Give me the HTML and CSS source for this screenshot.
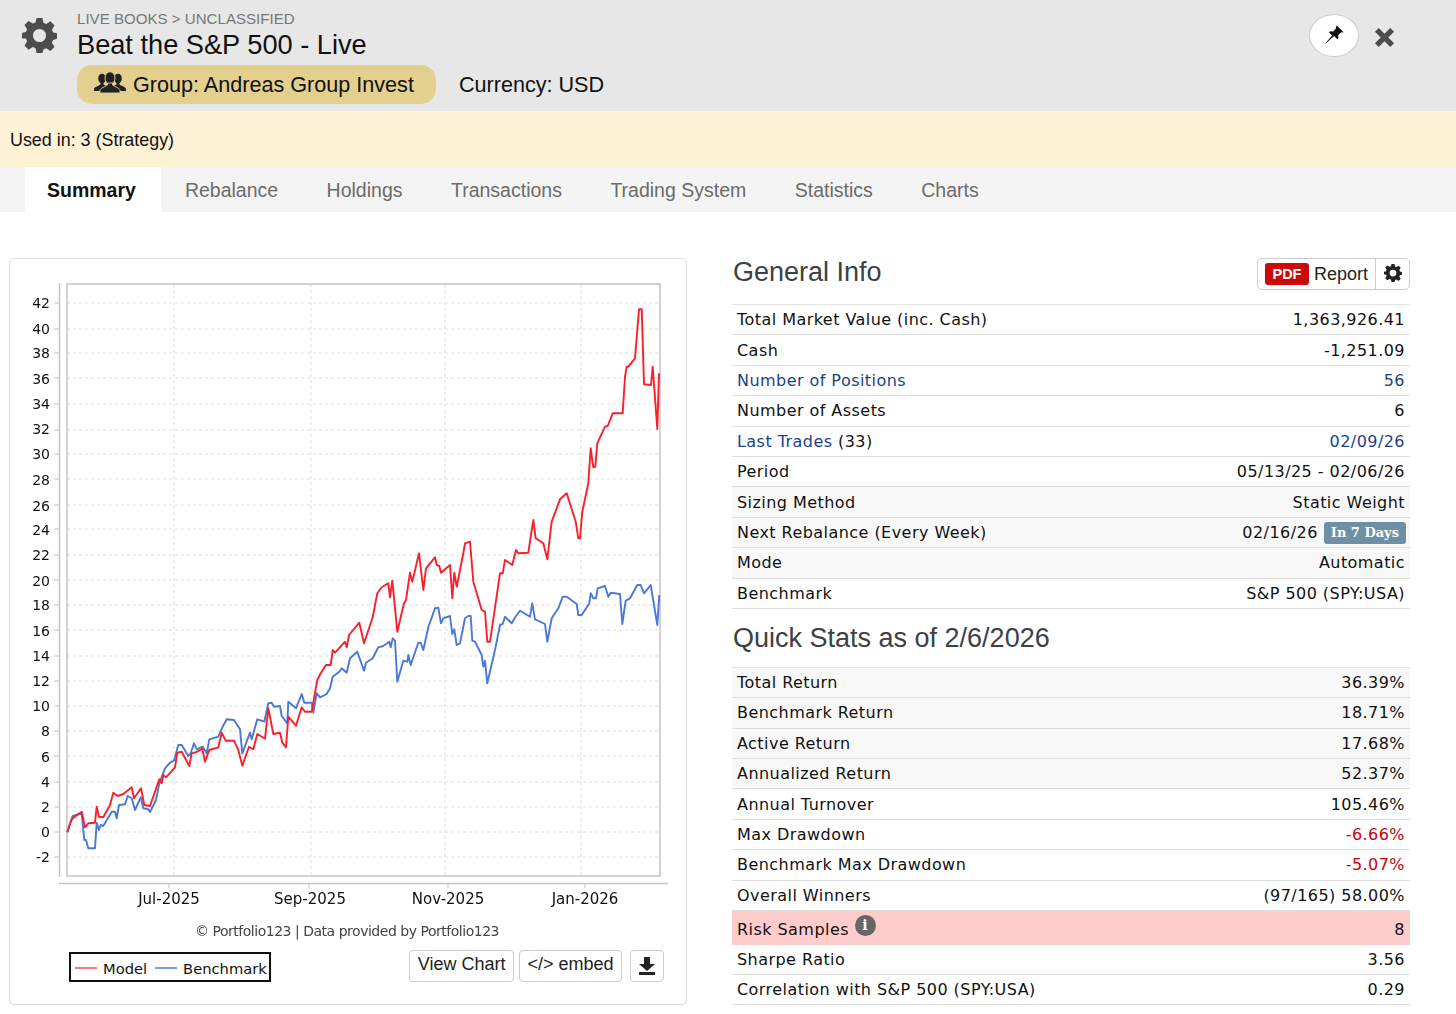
FILE: index.html
```html
<!DOCTYPE html>
<html lang="en">
<head>
<meta charset="utf-8">
<title>Beat the S&amp;P 500 - Live</title>
<link rel="stylesheet" href="styles.css">
</head>
<body>
<svg class="defs" width="0" height="0" aria-hidden="true">
  <defs>
    <symbol id="gear" viewBox="0 0 24 24">
      <path fill-rule="evenodd" d="M10 0h4l.7 3.300 1.900.8 2.900-1.800 2.800 2.800-1.800 2.900.8 1.900 2.700.6v3.800l-2.700.7-.8 1.900 1.800 2.900-2.800 2.800-2.900-1.800-1.900.8L14 24h-4l-.7-3.300-1.900-.8-2.900 1.800-2.800-2.800 1.800-2.900-.8-1.900L0 14v-3.800l2.700-.6.8-1.900-1.800-2.900 2.800-2.800 2.900 1.800 1.900-.8zM12 7.500a4.500 4.500 0 1 0 0 9 4.500 4.500 0 0 0 0-9z"/>
    </symbol>
  </defs>
</svg>
<header class="top">
  <svg class="top-gear"><use href="#gear"/></svg>
  <div class="top-text">
    <div class="crumb">LIVE BOOKS &gt; UNCLASSIFIED</div>
    <h1 class="title">Beat the S&amp;P 500 - Live</h1>
    <div class="meta">
      <span class="group">
        <svg class="group-icon" viewBox="0 0 32 22">
          <ellipse cx="8" cy="7.500" rx="3.800" ry="4.800"/>
          <path d="M0 20v-2c0-2 5-3 6.500-4.500v-2h3v2C11 15 16 16 16 18v2z"/>
          <ellipse cx="24" cy="7.500" rx="3.800" ry="4.800"/>
          <path d="M16 20v-2c0-2 5-3 6.500-4.500v-2h3v2C27 15 32 16 32 18v2z"/>
          <ellipse class="group-front" cx="16" cy="7" rx="5" ry="6.200"/>
          <path class="group-front" d="M6 22v-2.500c0-2.500 5.500-3.800 7.500-5.500v-2h5v2c2 1.700 7.500 3 7.500 5.500V22z"/>
        </svg>
        <span>Group: Andreas Group Invest</span>
      </span>
      <span class="currency">Currency: USD</span>
    </div>
  </div>
  <div class="top-actions">
    <button class="pin" type="button" aria-label="Pin">
      <svg class="pin-icon" viewBox="0 0 20 20"><path d="M12.500 .5l7 7-1.500.5-1-.4-3.200 3.200.3 3-1.200 1.200-3.300-3.300L.8 19.500l-.4-.4 7.100-8-3.300-3.300 1.200-1.200 3 .3 3.200-3.200-.4-1z"/></svg>
    </button>
    <svg class="close" viewBox="0 0 22 22" aria-label="Close"><path d="M5 1l6 6 6-6 4 4-6 6 6 6-4 4-6-6-6 6-4-4 6-6-6-6z"/></svg>
  </div>
</header>
<div class="notice">Used in: 3 (Strategy)</div>
<nav class="tabs">
  <a class="tab active">Summary</a>
  <a class="tab">Rebalance</a>
  <a class="tab">Holdings</a>
  <a class="tab">Transactions</a>
  <a class="tab">Trading System</a>
  <a class="tab">Statistics</a>
  <a class="tab">Charts</a>
</nav>
<main class="content">
  <section class="chart-card">
    <svg class="chart" viewBox="10 259 676 688">
      <g class="grid">
        <path d="M67 303H660M67 329H660M67 353H660M67 378H660M67 404H660M67 430H660M67 454H660M67 479H660M67 505H660M67 529H660M67 555H660M67 580H660M67 605H660M67 630H660M67 656H660M67 681H660M67 706H660M67 731H660M67 756H660M67 782H660M67 807H660M67 832H660M67 857H660"/>
        <path d="M174 284V876M311 284V876M445 284V876M581 284V876"/>
      </g>
      <rect class="frame" x="67" y="284" width="593" height="592"/>
      <path class="axis" d="M59.500 283V877M59 883.500H668"/>
      <path class="tick" d="M54 303H59M54 329H59M54 353H59M54 378H59M54 404H59M54 430H59M54 454H59M54 479H59M54 505H59M54 529H59M54 555H59M54 580H59M54 605H59M54 630H59M54 656H59M54 681H59M54 706H59M54 731H59M54 756H59M54 782H59M54 807H59M54 832H59M54 857H59M169 884V888M309 884V888M448 884V888M585 884V888"/>
      <g class="ylabels">
        <text x="50" y="308">42</text><text x="50" y="334">40</text><text x="50" y="358">38</text><text x="50" y="384">36</text><text x="50" y="409">34</text><text x="50" y="434">32</text><text x="50" y="459">30</text><text x="50" y="485">28</text><text x="50" y="511">26</text><text x="50" y="535">24</text><text x="50" y="560">22</text><text x="50" y="586">20</text><text x="50" y="610">18</text><text x="50" y="636">16</text><text x="50" y="661">14</text><text x="50" y="686">12</text><text x="50" y="711">10</text><text x="50" y="736">8</text><text x="50" y="762">6</text><text x="50" y="787">4</text><text x="50" y="812">2</text><text x="50" y="837">0</text><text x="50" y="862">-2</text>
      </g>
      <g class="xlabels">
        <text x="169" y="904">Jul-2025</text><text x="310" y="904">Sep-2025</text><text x="448" y="904">Nov-2025</text><text x="585" y="904">Jan-2026</text>
      </g>
      <polyline class="line-blue" points="67.300,832.300 70.700,821.700 72.700,816 79.300,814 81.700,814 84.300,840 86,840 88.300,848.300 95,848.300 96.700,822.700 99,830 100.700,825 103.300,826 111.700,811.700 115,811.700 116.700,818.300 119,805 125,804.300 127.700,796 131.700,798.300 135,810 140.700,797.300 143.300,808.300 148.300,809.300 150,812 156,800 159.300,783.300 165,768.300 170,762.700 174,760.700 178.300,745 181.700,745 188.300,756 190.700,753.300 194,743.300 196.700,749.300 202.700,746.700 206.700,753.300 209.300,739.300 218.300,736.700 222.700,726.700 226.700,719.300 234,720 240,729.300 242.300,753.300 250,732.700 251.700,739.300 257.300,719.300 264.300,721.700 268.300,703.300 271.700,702.700 274,706.700 280,706 281.700,716 287.300,723.300 288.300,701.700 296,708.300 301.700,694 304.300,702.700 311.700,702.700 313.300,712.700 316.700,693.300 320,697.300 326.700,694 330,688.300 332.700,676.700 339.300,671.700 341.700,668.300 346.700,672.700 350,658.300 357.300,651.700 364,670.700 366,662.700 372.700,658.300 378.300,647.300 383.300,646 389.300,641.700 390.700,647.300 392.700,638.300 395,640.700 397.300,681.700 403.300,660.700 407.300,661.700 408.300,655 410.700,665 418.300,642.700 420.700,642.700 423.300,650 428.300,627.300 435,608.300 438.300,607.700 441,623.300 443.300,618.300 450,616 452.300,634 454.300,629.300 456.700,645 460,643.300 465,618.300 468.300,616 470.700,616 472.300,640.700 475,641.700 481.700,655 483.300,666.700 485,660.700 487.300,683.300 495,650 500,625 502.700,624 505,616.700 511.700,623.300 516,616 520,610.700 530,616.700 532.300,603.300 535,619.300 545,624 547.300,641.700 551.700,618.300 558.300,608.300 562.700,596.700 566.700,596.700 576.700,604 578.300,615 581.700,615 589.300,603.300 590.700,593.300 593.300,598.300 596,598.300 597.700,588.300 605,586 608.300,596.700 610.700,592.700 620,594 622.300,624 625.700,600.700 630,598.300 637.300,585 640.700,585 644,593.300 650.700,585 657.300,625 659.300,595"/>
      <polyline class="line-red" points="67.300,832.300 70.700,821.700 72.700,818.300 81.700,811.700 85,827.300 88.300,823.300 95,822.700 96.700,806.700 99,816.700 103.300,817.300 110,805 113.300,792.700 117.700,796 123.300,794 131.700,787.300 134,798.300 141,788.300 144.300,805 150,806 157.300,785 159.300,779.300 161.700,783.300 163.300,775 166,777.300 175,767.300 177.300,752.700 181.700,751.700 189.300,766 191.700,753.300 196.700,752 202.300,748.700 205,761.700 209.300,750 218.300,747.300 221.700,732.700 225.700,740.700 234,740.700 238.300,750 242.300,765.700 249,746.700 253.300,749.300 257.300,734 265,738.700 268.300,708.300 273.300,734 280,732.700 282.300,742.700 286,747.300 288.300,716.700 296,725.700 301.700,707.300 305,711.700 311.700,711.700 317.300,680 320.700,673.300 326,665 330.700,665 332.700,650 335,652.700 345,641.700 346.700,647.300 349,635 359.300,622.700 364,643.300 372.700,617.300 377.300,593.300 381.700,587.300 388.300,583.300 390,597.300 392.300,580.700 397.300,631.700 404,603.300 406,600 410,572.700 412.300,581.700 419,553.300 423.300,590 426,568.300 435,557.300 436.700,565 439.300,566 441,572.700 450,565 452.300,598.300 454.300,572.700 456.700,586.700 463.300,553.300 465,543.300 470,541.700 473.300,581.700 481.700,610 485,611.700 487.300,641.700 490,641.700 500,573.300 502.700,573.300 505,560 512.300,565 516,550 518.300,553.300 528.300,552.700 533.300,520 535.700,538.300 543.300,543.300 547.300,559.300 551.700,521.700 560,499.300 566.700,493.300 575.700,521.700 578.300,538.300 580,538.300 582.300,511.700 588.300,483.300 590.700,448.300 593.300,467.300 595.300,466.700 597.300,443.300 605,426.700 607.700,426 612.700,413.300 622.700,413.300 625,376.700 626.700,366.700 628.300,366.700 635,358.300 639,309.300 641.700,309.300 644,384.300 651,385 652.700,366.700 657.300,429 659,373.300"/>
      <text class="credit" x="347" y="936">© Portfolio123 | Data provided by Portfolio123</text>
    </svg>
    <div class="chart-foot">
      <div class="legend">
        <span class="swatch swatch-red"></span><span class="legend-label">Model</span>
        <span class="swatch swatch-blue"></span><span class="legend-label">Benchmark</span>
      </div>
      <div class="chart-actions">
        <button class="btn" type="button"><span class="btn-label">View Chart</span></button>
        <button class="btn" type="button"><span class="btn-label">&lt;/&gt; embed</span></button>
        <button class="btn btn-icon" type="button" aria-label="Download">
          <svg class="download" viewBox="0 0 18 18"><path d="M6 0h6v7h5l-8 7-8-7h5zM1 15h16v3H1z"/></svg>
        </button>
      </div>
    </div>
  </section>
  <section class="info">
    <div class="info-head">
      <h2 class="section-title">General Info</h2>
      <div class="report">
        <span class="report-main"><b class="pdf">PDF</b><span>Report</span></span>
        <span class="report-gear"><svg class="small-gear"><use href="#gear"/></svg></span>
      </div>
    </div>
    <div class="rows">
      <div class="row"><span>Total Market Value (inc. Cash)</span><span>1,363,926.41</span></div>
      <div class="row"><span>Cash</span><span>-1,251.09</span></div>
      <div class="row"><a class="link">Number of Positions</a><a class="link">56</a></div>
      <div class="row"><span>Number of Assets</span><span>6</span></div>
      <div class="row"><span><a class="link">Last Trades</a> (33)</span><a class="link">02/09/26</a></div>
      <div class="row"><span>Period</span><span>05/13/25 - 02/06/26</span></div>
      <div class="row tinted"><span>Sizing Method</span><span>Static Weight</span></div>
      <div class="row tinted"><span>Next Rebalance (Every Week)</span><span class="rebalance"><span>02/16/26</span><b class="badge">In 7 Days</b></span></div>
      <div class="row tinted"><span>Mode</span><span>Automatic</span></div>
      <div class="row"><span>Benchmark</span><span>S&amp;P 500 (SPY:USA)</span></div>
    </div>
    <h2 class="section-title stats-title">Quick Stats as of 2/6/2026</h2>
    <div class="rows">
      <div class="row tinted"><span>Total Return</span><span>36.39%</span></div>
      <div class="row tinted"><span>Benchmark Return</span><span>18.71%</span></div>
      <div class="row tinted"><span>Active Return</span><span>17.68%</span></div>
      <div class="row tinted"><span>Annualized Return</span><span>52.37%</span></div>
      <div class="row"><span>Annual Turnover</span><span>105.46%</span></div>
      <div class="row"><span>Max Drawdown</span><span class="neg">-6.66%</span></div>
      <div class="row"><span>Benchmark Max Drawdown</span><span class="neg">-5.07%</span></div>
      <div class="row"><span>Overall Winners</span><span>(97/165) 58.00%</span></div>
      <div class="row risk"><span class="risk-label">Risk Samples <i class="info-dot">i</i></span><span>8</span></div>
      <div class="row"><span>Sharpe Ratio</span><span>3.56</span></div>
      <div class="row"><span>Correlation with S&amp;P 500 (SPY:USA)</span><span>0.29</span></div>
    </div>
  </section>
</main>
</body>
</html>
```

FILE: styles.css
```css
html, body { height: 100%; }
body {
  margin: 0;
  font-family: "Liberation Sans", Arial, sans-serif;
  color: #111;
  background: #fff;
  overflow: hidden;
}
.defs { position: absolute; }

/* Header */
.top {
  display: flex;
  height: 111px;
  padding-left: 22px;
  background: #e7e7e7;
}
.top-gear {
  width: 35px;
  height: 35px;
  margin-top: 18px;
  fill: #4d4d4d;
  flex: none;
}
.top-text { margin-left: 20px; padding-top: 9px; }
.crumb { font-size: 15.100px; line-height: 19px; color: #777; }
.title { margin: 0; font-size: 27.200px; font-weight: 400; line-height: 34px; color: #111; }
.meta { display: flex; align-items: center; gap: 23px; margin-top: 3px; }
.group {
  display: flex;
  align-items: center;
  gap: 7px;
  height: 39px;
  padding: 0 22px 0 17px;
  border-radius: 15px;
  background: #e3d08f;
  font-size: 21.600px;
}
.group-icon { width: 32px; height: 22px; margin-top: -5px; fill: #222; }
.group-front { stroke: #e3d08f; stroke-width: .9; }
.currency { font-size: 21.600px; }
.top-actions {
  display: flex;
  align-items: flex-start;
  gap: 15px;
  margin-left: auto;
  margin-right: 61px;
  padding-top: 14px;
}
.pin {
  display: flex;
  align-items: center;
  justify-content: center;
  width: 50px;
  height: 43px;
  padding: 0;
  border: 1px solid #ccc;
  border-radius: 50%;
  background: #fff;
}
.pin-icon { width: 19px; height: 19px; margin-bottom: 3px; fill: #111; }
.close { width: 21px; height: 21px; margin-top: 13px; fill: #4d4d4d; }

/* Notice + tabs */
.notice {
  height: 56px;
  padding-left: 10px;
  background: #fdf2d6;
  font-size: 17.900px;
  line-height: 58px;
}
.tabs {
  display: flex;
  height: 45px;
  padding-left: 25px;
  background: #f4f4f4;
}
.tab {
  padding: 0 24.500px 0 24px;
  font-size: 19.500px;
  line-height: 46px;
  color: #6b6b6b;
}
.tab.active {
  padding: 0 25px 0 22px;
  background: #fff;
  font-weight: 700;
  color: #111;
}

/* Content */
.content {
  display: flex;
  gap: 45px;
  padding: 46px 46px 0 9px;
}
.chart-card {
  box-sizing: border-box;
  width: 678px;
  height: 747px;
  border: 1px solid #ddd;
  border-radius: 5px;
}
.chart {
  display: block;
  width: 676px;
  height: 688px;
  filter: blur(.35px);
}
.grid path { fill: none; stroke: #ddd; stroke-dasharray: 3 3; }
.frame { fill: none; stroke: #c4c4c4; stroke-width: 1.500; }
.axis { fill: none; stroke: #c4c4c4; stroke-width: 1.500; }
.tick { fill: none; stroke: #c4c4c4; }
.ylabels text {
  font-family: "DejaVu Sans", sans-serif;
  font-size: 14px;
  text-anchor: end;
  fill: #111;
}
.xlabels text {
  font-family: "DejaVu Sans", sans-serif;
  font-size: 15px;
  text-anchor: middle;
  fill: #111;
}
.credit {
  font-family: "DejaVu Sans", sans-serif;
  font-size: 14px;
  letter-spacing: -.48px;
  text-anchor: middle;
  fill: #444;
}
.line-red, .line-blue { fill: none; stroke-width: 1.900; stroke-linejoin: round; }
.line-red { stroke: #f9202c; }
.line-blue { stroke: #4a78d6; }

.chart-foot {
  display: flex;
  align-items: flex-end;
  justify-content: space-between;
  margin-top: 3px;
  padding: 0 22px 0 59px;
}
.legend {
  display: flex;
  align-items: center;
  box-sizing: border-box;
  width: 202px;
  height: 30px;
  padding: 2px 0 0 4px;
  border: 2px solid #111;
  font-family: "DejaVu Sans", sans-serif;
  font-size: 14.700px;
  color: #111;
}
.swatch { width: 22px; height: 2px; margin-right: 6px; }
.swatch-red { background: #ff7b82; }
.swatch-blue { margin-left: 8px; background: #7f9fe3; }
.chart-actions { display: flex; gap: 5px; }
.btn {
  height: 32px;
  padding: 0 7.500px;
  border: 1px solid #ccc;
  border-radius: 4px;
  background: #fff;
  font-family: "Liberation Sans", Arial, sans-serif;
  font-size: 18px;
  color: #222;
}
.btn-label { display: block; margin-top: -4px; }
.btn-icon {
  display: flex;
  align-items: center;
  justify-content: center;
  width: 34px;
  margin-left: 3px;
  padding: 0;
}
.download { width: 18px; height: 18px; fill: #222; }

/* Right column */
.info { width: 678px; }
.info-head {
  display: flex;
  align-items: flex-start;
  justify-content: space-between;
  height: 46px;
}
.info-head .section-title { line-height: 29px; }
.section-title {
  margin: 0 0 0 1px;
  font-size: 27px;
  font-weight: 400;
  line-height: 32px;
  color: #3c4148;
}
.stats-title { margin-top: 13px; margin-bottom: 13px; }
.report {
  display: flex;
  box-sizing: border-box;
  height: 32px;
  border: 1px solid #ccc;
  border-radius: 5px;
  font-size: 18px;
  color: #222;
}
.report-main {
  display: flex;
  align-items: center;
  gap: 5px;
  padding: 0 7px;
}
.pdf {
  padding: 0 7.500px;
  border-radius: 3px;
  background: #cc0a0a;
  color: #fff;
  font-size: 14.500px;
  line-height: 22px;
}
.report-gear {
  display: flex;
  align-items: center;
  justify-content: center;
  width: 33px;
  border-left: 1px solid #ccc;
}
.small-gear { width: 18px; height: 18px; fill: #222; margin-bottom: 2px; }

.rows { border-top: 1px solid #e4e4e4; }
.row {
  display: flex;
  align-items: center;
  justify-content: space-between;
  box-sizing: border-box;
  height: 30.400px;
  padding: 0 5px;
  border-bottom: 1px solid #ddd;
  font-family: "DejaVu Sans", sans-serif;
  font-size: 16px;
  letter-spacing: .45px;
  color: #111;
}
.tinted { background: #f8f8f8; }
.link { color: #1c3f8a; }
.neg { color: #c9000f; }
.rebalance { display: flex; align-items: center; gap: 6px; }
.badge {
  margin: 2px -1px 0 0;
  padding: 0 7px;
  border-radius: 3px;
  background: #6f90a4;
  color: #fff;
  font-family: "DejaVu Serif", serif;
  font-size: 13px;
  letter-spacing: 0;
  line-height: 22px;
}
.row.risk { height: 33.600px; padding-top: 3px; background: #ffcccc; border-bottom: 0; }
.risk-label { display: flex; align-items: center; white-space: pre; }
.info-dot {
  display: block;
  width: 21px;
  height: 21px;
  margin: -7px 0 0 0;
  border-radius: 50%;
  background: #666;
  color: #fff;
  font-family: "DejaVu Serif", serif;
  font-size: 14px;
  font-style: normal;
  font-weight: 700;
  letter-spacing: 0;
  line-height: 21px;
  text-align: center;
}
```
